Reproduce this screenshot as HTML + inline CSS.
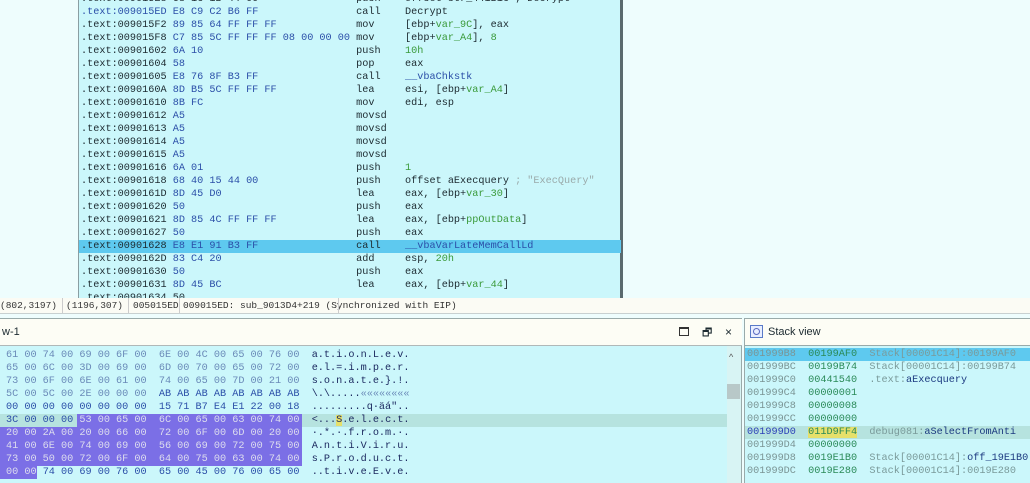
<!DOCTYPE html>
<html><head><meta charset="utf-8"><style>
*{margin:0;padding:0;box-sizing:border-box}
body{width:1030px;height:483px;overflow:hidden;background:#eefdfd;position:relative;font-family:"Liberation Mono",monospace;font-size:10.2px;color:#1c2a30}
.a{position:absolute;white-space:pre;line-height:13px}
#dis{position:absolute;left:78px;top:0;width:545px;height:298px;background:#cbf7fb;border-left:1px solid #8a9ea2;border-right:3px solid #5a6a6e}
.b{color:#2b4fa8}.g{color:#3a9a3a}.gr{color:#9aaaaa}.hl{background:#5ec9ef}
#st{position:absolute;left:0;top:298px;width:1030px;height:16px;background:#fbfbf4;border-bottom:1px solid #c8d0d0;font-size:9.5px;color:#333}
#st span{position:absolute;top:2px;white-space:pre}
#hd{position:absolute;left:0;top:318px;width:742px;height:28px;background:#fdfdf5;border-top:1px solid #9aa;border-bottom:1px solid #b0b8b8;font-family:"Liberation Sans",sans-serif;font-size:11px}
#hd2{position:absolute;left:744px;top:318px;width:286px;height:28px;background:#fdfdf5;border:1px solid #9aa;border-right:none;font-family:"Liberation Sans",sans-serif;font-size:11px}
#hex{position:absolute;left:0;top:346px;width:742px;height:137px;background:#cbf7fb;border-right:1px solid #9aa}
#stk{position:absolute;left:744px;top:346px;width:286px;height:137px;background:#cbf7fb;border-left:1px solid #9aa}
.sel{position:absolute;background:#7b6fe6}
.sa{color:#7a9494}.sv{color:#2a8a58}.sc{color:#7a9a9a}
</style></head><body>
<div id="dis">
<div class="a" style="left:2px;top:-7px">.text:009015E8 68 1C 1B 44 00                push    offset str_441B1C ; Decrypt</div>
<div class="a" style="left:2px;top:6px"><span class="b">.text:009015ED</span> <span class="b">E8 C9 C2 B6 FF</span>                call    Decrypt</div>
<div class="a" style="left:2px;top:19px">.text:009015F2 <span class="b">89 85 64 FF FF FF</span>             mov     [ebp+<span class="g">var_9C</span>], eax</div>
<div class="a" style="left:2px;top:32px">.text:009015F8 <span class="b">C7 85 5C FF FF FF 08 00 00 00</span> mov     [ebp+<span class="g">var_A4</span>], <span class="g">8</span></div>
<div class="a" style="left:2px;top:45px">.text:00901602 <span class="b">6A 10</span>                         push    <span class="g">10h</span></div>
<div class="a" style="left:2px;top:58px">.text:00901604 <span class="b">58</span>                            pop     eax</div>
<div class="a" style="left:2px;top:71px">.text:00901605 <span class="b">E8 76 8F B3 FF</span>                call    <span class="b">__vbaChkstk</span></div>
<div class="a" style="left:2px;top:84px">.text:0090160A <span class="b">8D B5 5C FF FF FF</span>             lea     esi, [ebp+<span class="g">var_A4</span>]</div>
<div class="a" style="left:2px;top:97px">.text:00901610 <span class="b">8B FC</span>                         mov     edi, esp</div>
<div class="a" style="left:2px;top:110px">.text:00901612 <span class="b">A5</span>                            movsd</div>
<div class="a" style="left:2px;top:123px">.text:00901613 <span class="b">A5</span>                            movsd</div>
<div class="a" style="left:2px;top:136px">.text:00901614 <span class="b">A5</span>                            movsd</div>
<div class="a" style="left:2px;top:149px">.text:00901615 <span class="b">A5</span>                            movsd</div>
<div class="a" style="left:2px;top:162px">.text:00901616 <span class="b">6A 01</span>                         push    <span class="g">1</span></div>
<div class="a" style="left:2px;top:175px">.text:00901618 <span class="b">68 40 15 44 00</span>                push    offset aExecquery <span class="gr">; "ExecQuery"</span></div>
<div class="a" style="left:2px;top:188px">.text:0090161D <span class="b">8D 45 D0</span>                      lea     eax, [ebp+<span class="g">var_30</span>]</div>
<div class="a" style="left:2px;top:201px">.text:00901620 <span class="b">50</span>                            push    eax</div>
<div class="a" style="left:2px;top:214px">.text:00901621 <span class="b">8D 85 4C FF FF FF</span>             lea     eax, [ebp+<span class="g">ppOutData</span>]</div>
<div class="a" style="left:2px;top:227px">.text:00901627 <span class="b">50</span>                            push    eax</div>
<div class="a hl" style="left:0;top:240px;width:542px;padding-left:2px">.text:00901628 <span class="b">E8 E1 91 B3 FF</span>                call    <span class="b">__vbaVarLateMemCallLd</span></div>
<div class="a" style="left:2px;top:253px">.text:0090162D <span class="b">83 C4 20</span>                      add     esp, <span class="g">20h</span></div>
<div class="a" style="left:2px;top:266px">.text:00901630 <span class="b">50</span>                            push    eax</div>
<div class="a" style="left:2px;top:279px">.text:00901631 <span class="b">8D 45 BC</span>                      lea     eax, [ebp+<span class="g">var_44</span>]</div>
<div class="a" style="left:2px;top:292px">.text:00901634 50</div>
</div>
<div id="st"><span style="left:0">(802,3197)</span><span style="left:66px">(1196,307)</span><span style="left:133px">005015ED</span><span style="left:183px">009015ED: sub_9013D4+219 (Synchronized with EIP)</span>
<div style="position:absolute;left:62px;top:0;width:1px;height:15px;background:#ccc"></div><div style="position:absolute;left:128px;top:0;width:1px;height:15px;background:#ccc"></div><div style="position:absolute;left:179px;top:0;width:1px;height:15px;background:#ccc"></div><div style="position:absolute;left:338px;top:0;width:1px;height:15px;background:#ccc"></div></div>
<div id="hd"><span style="position:absolute;left:2px;top:7px">w-1</span>
<span style="position:absolute;left:679px;top:8px;width:10px;height:9px;border:1px solid #333;border-top-width:2px"></span>
<span style="position:absolute;left:702px;top:5px">&#x1F5D7;</span><span style="position:absolute;left:725px;top:6px;font-size:12px">×</span></div>
<div id="hd2"><span style="position:absolute;left:5px;top:6px;width:13px;height:13px;border:1px solid #5a7ac8;background:#e8eeff"><span style="position:absolute;left:2px;top:2px;width:7px;height:7px;border:1px solid #5a6ac0;border-radius:50%"></span></span><span style="position:absolute;left:23px;top:7px">Stack view</span></div>
<div id="hex">
<div style="position:absolute;left:0;top:68px;width:727px;height:13px;background:#b6e3df"></div>
<div class="sel" style="left:77px;top:68px;width:225px;height:13px"></div>
<div class="sel" style="left:0;top:81px;width:302px;height:39px"></div>
<div class="sel" style="left:0;top:120px;width:37px;height:13px"></div>
<div class="a" style="left:6px;top:3px;color:#6a8ab8">61 00 74 00 69 00 6F 00  6E 00 4C 00 65 00 76 00  <span style="color:#1c2a60">a.t.i.o.n.L.e.v.</span></div>
<div class="a" style="left:6px;top:16px;color:#6a8ab8">65 00 6C 00 3D 00 69 00  6D 00 70 00 65 00 72 00  <span style="color:#1c2a60">e.l.=.i.m.p.e.r.</span></div>
<div class="a" style="left:6px;top:29px;color:#6a8ab8">73 00 6F 00 6E 00 61 00  74 00 65 00 7D 00 21 00  <span style="color:#1c2a60">s.o.n.a.t.e.}.!.</span></div>
<div class="a" style="left:6px;top:42px;color:#6a8ab8">5C 00 5C 00 2E 00 00 00  <span style="color:#2b4fa8">AB AB AB AB AB AB AB AB</span>  <span style="color:#1c2a60">\.\.....<span style="color:#6a8ab8">««««««««</span></span></div>
<div class="a" style="left:6px;top:55px;color:#2b4fa8">00 00 00 00 00 00 00 00  15 71 B7 E4 E1 22 00 18  <span style="color:#1c2a60">.........q·äá"..</span></div>
<div class="a" style="left:6px;top:68px;color:#2b4fa8">3C 00 00 00 <span style="color:#dde">53 00 65 00  6C 00 65 00 63 00 74 00</span>  <span style="color:#1c2a60">&lt;...<span style="background:#e6e06a">S</span>.e.l.e.c.t.</span></div>
<div class="a" style="left:6px;top:81px;color:#dde">20 00 2A 00 20 00 66 00  72 00 6F 00 6D 00 20 00  <span style="color:#1c2a60">·.*.·.f.r.o.m.·.</span></div>
<div class="a" style="left:6px;top:94px;color:#dde">41 00 6E 00 74 00 69 00  56 00 69 00 72 00 75 00  <span style="color:#1c2a60">A.n.t.i.V.i.r.u.</span></div>
<div class="a" style="left:6px;top:107px;color:#dde">73 00 50 00 72 00 6F 00  64 00 75 00 63 00 74 00  <span style="color:#1c2a60">s.P.r.o.d.u.c.t.</span></div>
<div class="a" style="left:6px;top:120px;color:#2b4fa8"><span style="color:#dde">00 00</span> 74 00 69 00 76 00  65 00 45 00 76 00 65 00  <span style="color:#1c2a60">..t.i.v.e.E.v.e.</span></div>
<div style="position:absolute;left:727px;top:0;width:14px;height:137px;background:#d8f4f4"></div>
<div style="position:absolute;left:729px;top:6px;font-size:9px;color:#555;font-family:'Liberation Sans'">^</div>
<div style="position:absolute;left:727px;top:38px;width:13px;height:15px;background:#b8c8c8"></div>
</div>
<div id="stk">
<div style="position:absolute;left:0;top:2px;width:286px;height:13px;background:#5ec9ef"></div>
<div style="position:absolute;left:0;top:80px;width:286px;height:13px;background:#b6e3df"></div>
<div class="a" style="left:2px;top:2px"><span class="sa">001999B8</span>  <span class="sv">00199AF0</span>  <span class="sc">Stack[00001C14]:00199AF0</span></div>
<div class="a" style="left:2px;top:15px"><span class="sa">001999BC</span>  <span class="sv">00199B74</span>  <span class="sc">Stack[00001C14]:00199B74</span></div>
<div class="a" style="left:2px;top:28px"><span class="sa">001999C0</span>  <span class="sv">00441540</span>  <span class="sc">.text:</span><span style="color:#1c3a80">aExecquery</span></div>
<div class="a" style="left:2px;top:41px"><span class="sa">001999C4</span>  <span class="sv">00000001</span></div>
<div class="a" style="left:2px;top:54px"><span class="sa">001999C8</span>  <span class="sv">00000008</span></div>
<div class="a" style="left:2px;top:67px"><span class="sa">001999CC</span>  <span class="sv">00000000</span></div>
<div class="a" style="left:2px;top:80px"><span style="color:#2b3fb8">001999D0</span>  <span class="sv" style="background:#e6e06a">011D9FF4</span>  <span class="sc">debug081:</span><span style="color:#1c3a80">aSelectFromAnti</span></div>
<div class="a" style="left:2px;top:93px"><span class="sa">001999D4</span>  <span class="sv">00000000</span></div>
<div class="a" style="left:2px;top:106px"><span class="sa">001999D8</span>  <span class="sv">0019E1B0</span>  <span class="sc">Stack[00001C14]:</span><span style="color:#1c3a80">off_19E1B0</span></div>
<div class="a" style="left:2px;top:119px"><span class="sa">001999DC</span>  <span class="sv">0019E280</span>  <span class="sc">Stack[00001C14]:0019E280</span></div>
</div>
</body></html>
